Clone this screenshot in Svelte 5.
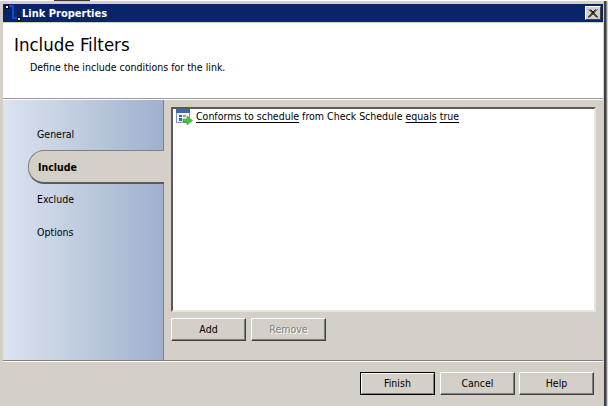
<script>
	const tabs = ['General', 'Include', 'Exclude', 'Options'];
	let active = 'Include';
</script>

<div class="topstrip"><span class="behind"></span></div>
<div class="window">
	<div class="titlebar">
		<svg class="logo" width="19" height="18" viewBox="0 0 19 18" shape-rendering="crispEdges">
			<path d="M5 2H10V14H15" fill="none" stroke="#0a50c8" stroke-width="2" />
			<rect x="2.5" y="1.5" width="3" height="3" fill="#fff" stroke="#000" />
			<rect x="14.5" y="13.5" width="3" height="3" fill="#fff" stroke="#000" />
		</svg>
		<span class="title">Link Properties</span>
		<button class="close" aria-label="Close">
			<svg width="10" height="9" viewBox="0 0 10 9">
				<path d="M1 0.5L9 8.5M2.5 0.5L10 8.5M9 0.5L1 8.5M7.5 0.5L0 8.5" stroke="#000" stroke-width="1" fill="none" />
			</svg>
		</button>
	</div>

	<header>
		<h1>Include Filters</h1>
		<p>Define the include conditions for the link.</p>
	</header>

	<div class="middle">
		<nav>
			{#each tabs as tab}
				<div class="tab" class:active={tab === active}>{tab}</div>
			{/each}
		</nav>
		<main>
			<div class="list">
				<div class="row">
					<svg class="rule-icon" width="17" height="16" viewBox="0 0 17 16">
						<rect x="0.5" y="0.5" width="13" height="13" fill="#eef2fa" stroke="#7f93b8" />
						<rect x="0" y="0" width="14" height="4" fill="#3f68b0" />
						<rect x="3" y="6" width="3" height="2" fill="#3a62b0" />
						<rect x="7" y="6" width="3" height="2" fill="#c8a040" />
						<rect x="3" y="9" width="3" height="3" fill="#3a62b0" />
						<path d="M7 10H11V7L16.5 11.5L11 16V13H7Z" fill="#46c832" stroke="#2c9420" stroke-width="0.5" />
					</svg>
					<span class="rule"><u>Conforms to schedule</u> from Check Schedule <u>equals</u> <u>true</u></span>
				</div>
			</div>
			<div class="list-buttons">
				<button class="btn">Add</button>
				<button class="btn" disabled>Remove</button>
			</div>
		</main>
	</div>

	<footer>
		<button class="btn default">Finish</button>
		<button class="btn">Cancel</button>
		<button class="btn help">Help</button>
	</footer>
</div>

<style>
	:global(body) {
		margin: 0;
		background: #d4d0c8;
		overflow: hidden;
	}

	.topstrip {
		height: 1px;
		background: #fff;
		position: relative;
	}

	.behind {
		position: absolute;
		left: 54px;
		top: 0;
		width: 36px;
		height: 1px;
		background: #333;
	}

	.window {
		width: 603px;
		height: 405px;
		box-sizing: border-box;
		display: flex;
		flex-direction: column;
		background: #d4d0c8;
		border-top: 3px solid #d4d0c8;
		border-left: 3px solid #d4d0c8;
		box-shadow: 1px 0 0 #d4d0c8, 3px 0 0 #404040, 4px 0 0 #808080;
		font-family: 'DejaVu Sans Condensed', 'DejaVu Sans', sans-serif;
		font-size: 10.5px;
		color: #000;
	}

	.titlebar {
		height: 18px;
		flex: none;
		display: flex;
		align-items: center;
		background: #0a246a;
		color: #fff;
	}

	.logo {
		flex: none;
	}

	.title {
		font-weight: bold;
		font-size: 11px;
	}

	.close {
		margin-left: auto;
		margin-right: 2px;
		width: 16px;
		height: 14px;
		padding: 0;
		display: flex;
		align-items: center;
		justify-content: center;
		background: #d4d0c8;
		border: 1px solid;
		border-color: #fff #404040 #404040 #fff;
	}

	header {
		flex: none;
		height: 76px;
		box-sizing: border-box;
		margin-top: 1px;
		background: #fff;
		border-bottom: 1px solid #9a96a0;
		box-shadow: 0 1px 0 #fff;
		padding: 11px 0 0 11px;
	}

	h1 {
		margin: 0;
		font-size: 18.5px;
		font-weight: normal;
		line-height: 22px;
	}

	p {
		margin: 5px 0 0 16px;
		line-height: 13px;
	}

	.middle {
		flex: 1;
		min-height: 0;
		display: flex;
		margin-top: 1px;
	}

	nav {
		width: 161px;
		flex: none;
		box-sizing: border-box;
		padding-top: 18px;
		background: linear-gradient(90deg, #dce3f1 0%, #b8c6da 60%, #a0b0cd 100%);
		border-right: 1px solid #808080;
	}

	.tab {
		height: 33px;
		margin-left: 25px;
		padding-left: 9px;
		display: flex;
		align-items: center;
		line-height: 13px;
	}

	.tab.active {
		box-sizing: border-box;
		height: 34px;
		margin: -1px -1px -1px 25px;
		position: relative;
		padding: 1px 0 0 9px;
		font-weight: bold;
		background: #d4d0c8;
		border: 1px solid #808080;
		border-right: none;
		border-bottom: 2px solid #5c5c60;
		border-radius: 16px 0 0 16px;
	}

	main {
		flex: 1;
		padding: 7px 7px 0 7px;
		display: flex;
		flex-direction: column;
		min-width: 0;
	}

	.list {
		height: 205px;
		box-sizing: border-box;
		background: #fff;
		border: 2px solid;
		border-color: #5a5a5a #e8e6e0 #e8e6e0 #5a5a5a;
		padding: 0 3px;
	}

	.row {
		display: flex;
		align-items: center;
		height: 16px;
		gap: 3px;
	}

	.rule-icon {
		flex: none;
	}

	.rule {
		margin-top: -2px;
	}

	.rule u {
		text-underline-offset: 2px;
	}

	.list-buttons {
		display: flex;
		gap: 5px;
		margin-top: 6px;
	}

	.btn {
		width: 75px;
		height: 23px;
		padding: 0 0 2px;
		box-sizing: border-box;
		background: #d4d0c8;
		font: inherit;
		color: #000;
		border: 1px solid;
		border-color: #fff #404040 #404040 #fff;
		box-shadow: inset -1px -1px 0 #808080;
	}

	.btn:disabled {
		color: #808080;
		text-shadow: 1px 1px 0 #fff;
	}

	.btn.default {
		border-color: #000;
		box-shadow: inset 1px 1px 0 #fff, inset -1px -1px 0 #808080;
	}

	.btn.help {
		margin-left: -1px;
	}

	footer {
		flex: none;
		height: 46px;
		box-sizing: border-box;
		border-top: 1px solid #808080;
		box-shadow: inset 0 1px 0 #fff;
		display: flex;
		justify-content: flex-end;
		gap: 5px;
		padding: 11px 9px 0 0;
	}
</style>
